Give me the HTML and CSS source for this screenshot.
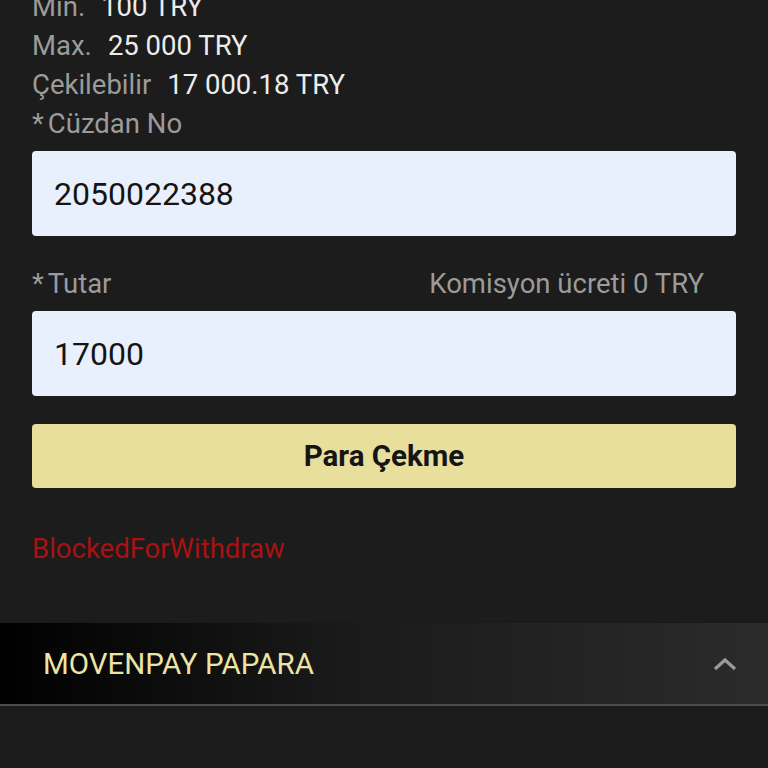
FILE: index.html
```html
<!DOCTYPE html>
<html lang="tr">
<head>
  <meta charset="UTF-8" />
  <meta name="viewport" content="width=device-width, initial-scale=1.0"/>
  <title>Para Çekme</title>
  <link rel="stylesheet" href="styles.css">
</head>
<body>
  <div class="card">
    <div class="limit"><span class="label">Min.</span><span class="value">100 TRY</span></div>
    <div class="limit"><span class="label">Max.</span><span class="value">25 000 TRY</span></div>
    <div class="limit"><span class="label">Çekilebilir</span><span class="value">17 000.18 TRY</span></div>

    <div class="field-label"><span class="star">*</span>Cüzdan No</div>
    <input class="field" type="text" value="2050022388" />

    <div class="field-row">
      <div class="field-label"><span class="star">*</span>Tutar</div>
      <div class="fee">Komisyon ücreti 0 TRY</div>
    </div>
    <input class="field" type="text" value="17000" />

    <button class="submit">Para Çekme</button>

    <p class="error">BlockedForWithdraw</p>
  </div>

  <!-- Ödeme yöntemi -->
  <div class="method">
    <span class="method-name">MOVENPAY PAPARA</span>
    <svg class="chevron" width="24" height="14" viewBox="0 0 24 14">
      <polyline points="2,12 12,3 22,12" fill="none" stroke="#9a9a9a" stroke-width="3.2" />
    </svg>
  </div>
</body>
</html>
```

FILE: styles.css
```css
* {
  margin: 0;
  padding: 0;
  box-sizing: border-box;
  font-family: Roboto, "Liberation Sans", Arial, sans-serif;
}

body, html {
  height: 100%;
  width: 100%;
}

body {
  background: #1b1b1b;
  overflow: hidden;
}

.card {
  margin-top: -13px;
  padding: 0 32px 53px;
  background: #1c1c1c;
  border-radius: 0 0 14px 14px;
}

.limit {
  font-size: 27.5px;
  line-height: 39px;
}

.label {
  color: #9b9b9b;
}

.value {
  color: #ececec;
  margin-left: 16px;
}

.field-label {
  font-size: 27.5px;
  line-height: 39px;
  color: #9b9b9b;
}

.star {
  margin-right: 4px;
}

.field {
  display: block;
  width: 100%;
  height: 85px;
  margin: 8px 0 0;
  padding: 0 22px;
  border: none;
  border-radius: 4px;
  background: #e8f0fe;
  color: #141414;
  font-size: 32px;
  outline: none;
}

.field-row {
  display: flex;
  justify-content: space-between;
  margin-top: 28px;
  padding-right: 32px;
}

.fee {
  font-size: 27.5px;
  line-height: 39px;
  color: #9b9b9b;
}

.submit {
  display: block;
  width: 100%;
  height: 64px;
  margin-top: 28px;
  border: none;
  border-radius: 4px;
  background: #e9df9d;
  color: #151515;
  font-size: 29.5px;
  font-weight: bold;
}

.error {
  margin-top: 41px;
  font-size: 27.5px;
  line-height: 39px;
  color: #a81212;
}

/* Ödeme yöntemi başlığı */
.method {
  display: flex;
  justify-content: space-between;
  align-items: center;
  height: 83px;
  margin-top: 2px;
  padding: 0 31px 0 43px;
  background: linear-gradient(90deg, #000 0%, #1a1a1a 45%, #2b2b2b 100%);
  border-bottom: 2px solid #4c4c4c;
}

.method-name {
  font-size: 29.5px;
  color: #ece4a5;
}
```
